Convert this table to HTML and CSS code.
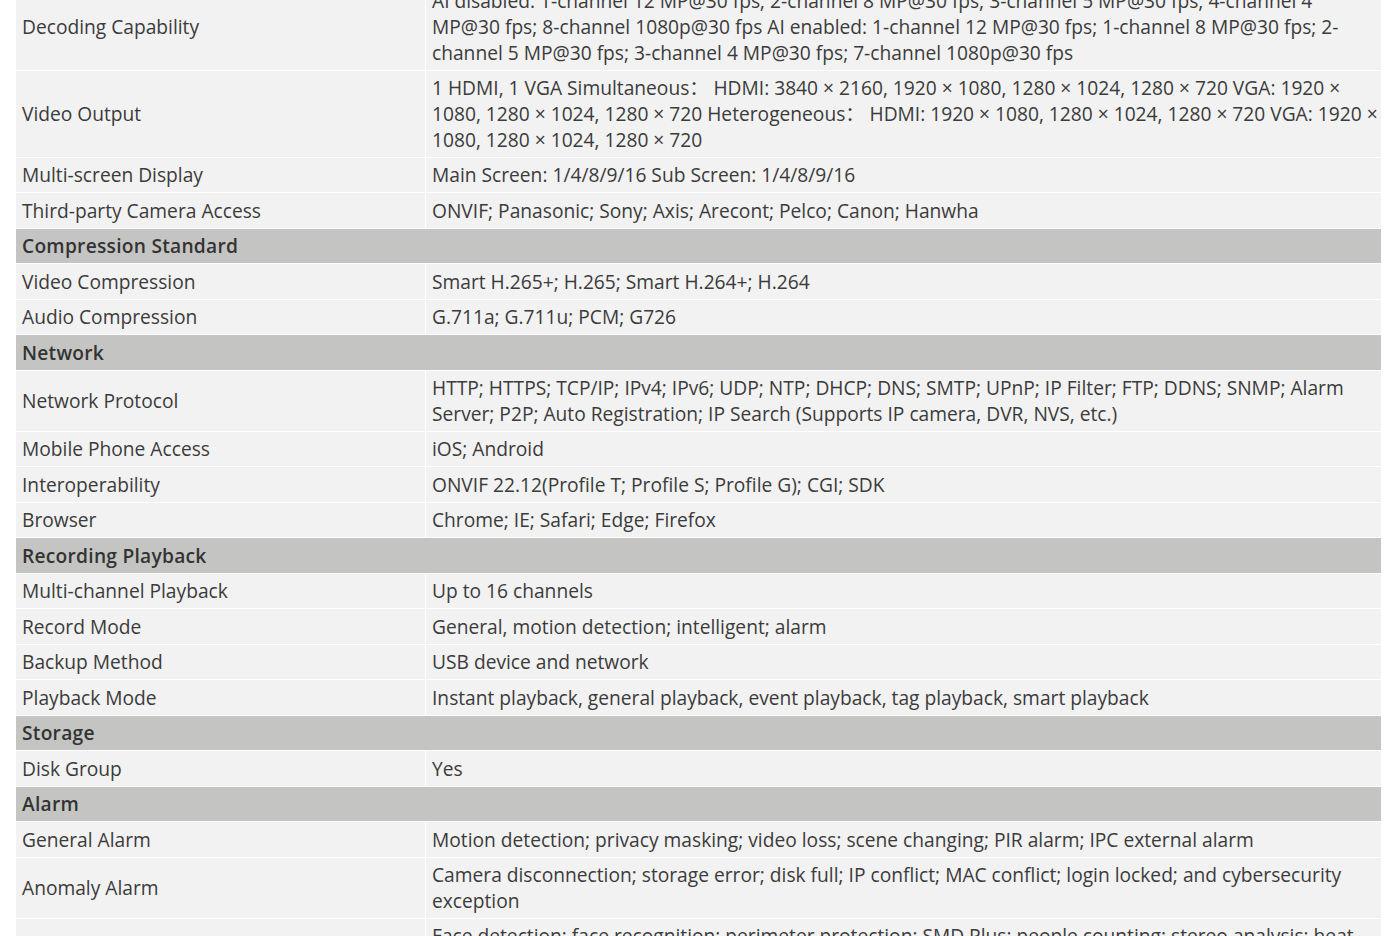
FILE: index.html
```html
<!DOCTYPE html>
<html lang="en">
<head>
<meta charset="utf-8">
<title>Specifications</title>
<link rel="stylesheet" href="styles.css">
</head>
<body>
<div class="page">
<table class="spec-table">
<colgroup><col class="col-label"><col class="col-value"></colgroup>
<tbody>
<tr><td>Decoding Capability</td><td>AI disabled: 1-channel 12 MP@30 fps; 2-channel 8 MP@30 fps; 3-channel 5 MP@30 fps; 4-channel 4 MP@30 fps; 8-channel 1080p@30 fps AI enabled: 1-channel 12 MP@30 fps; 1-channel 8 MP@30 fps; 2-channel 5 MP@30 fps; 3-channel 4 MP@30 fps; 7-channel 1080p@30 fps</td></tr>
<tr><td>Video Output</td><td>1 HDMI, 1 VGA Simultaneous： HDMI: 3840 × 2160, 1920 × 1080, 1280 × 1024, 1280 × 720 VGA: 1920 × 1080, 1280 × 1024, 1280 × 720 Heterogeneous： HDMI: 1920 × 1080, 1280 × 1024, 1280 × 720 VGA: 1920 × 1080, 1280 × 1024, 1280 × 720</td></tr>
<tr><td>Multi-screen Display</td><td>Main Screen: 1/4/8/9/16 Sub Screen: 1/4/8/9/16</td></tr>
<tr><td>Third-party Camera Access</td><td>ONVIF; Panasonic; Sony; Axis; Arecont; Pelco; Canon; Hanwha</td></tr>
<tr class="section"><td colspan="2">Compression Standard</td></tr>
<tr><td>Video Compression</td><td>Smart H.265+; H.265; Smart H.264+; H.264</td></tr>
<tr><td>Audio Compression</td><td>G.711a; G.711u; PCM; G726</td></tr>
<tr class="section"><td colspan="2">Network</td></tr>
<tr><td>Network Protocol</td><td>HTTP; HTTPS; TCP/IP; IPv4; IPv6; UDP; NTP; DHCP; DNS; SMTP; UPnP; IP Filter; FTP; DDNS; SNMP; Alarm Server; P2P; Auto Registration; IP Search (Supports IP camera, DVR, NVS, etc.)</td></tr>
<tr><td>Mobile Phone Access</td><td>iOS; Android</td></tr>
<tr><td>Interoperability</td><td>ONVIF 22.12(Profile T; Profile S; Profile G); CGI; SDK</td></tr>
<tr><td>Browser</td><td>Chrome; IE; Safari; Edge; Firefox</td></tr>
<tr class="section"><td colspan="2">Recording Playback</td></tr>
<tr><td>Multi-channel Playback</td><td>Up to 16 channels</td></tr>
<tr><td>Record Mode</td><td>General, motion detection; intelligent; alarm</td></tr>
<tr><td>Backup Method</td><td>USB device and network</td></tr>
<tr><td>Playback Mode</td><td>Instant playback, general playback, event playback, tag playback, smart playback</td></tr>
<tr class="section"><td colspan="2">Storage</td></tr>
<tr><td>Disk Group</td><td>Yes</td></tr>
<tr class="section"><td colspan="2">Alarm</td></tr>
<tr><td>General Alarm</td><td>Motion detection; privacy masking; video loss; scene changing; PIR alarm; IPC external alarm</td></tr>
<tr><td>Anomaly Alarm</td><td>Camera disconnection; storage error; disk full; IP conflict; MAC conflict; login locked; and cybersecurity exception</td></tr>
<tr><td>Smart Alarm</td><td>Face detection; face recognition; perimeter protection; SMD Plus; people counting; stereo analysis; heat map; video metadata; ANPR</td></tr>
</tbody>
</table>
</div>
</body>
</html>
```

FILE: styles.css
```css
html, body {
  margin: 0;
  padding: 0;
  background: #ffffff;
}

body {
  font-family: "Open Sans", "Noto Sans CJK SC", sans-serif;
  font-size: 19.2px;
  line-height: 25.7px;
  color: #3b3b3b;
}

.page {
  padding: 0 17px 0 16px;
}

.spec-table {
  width: 100%;
  margin-top: -16px;
  border-collapse: collapse;
  table-layout: fixed;
}

.col-label {
  width: 30%;
}

.spec-table td {
  background: #f2f2f2;
  padding: 4.4px 0 4.4px 6px;
  vertical-align: middle;
  border-bottom: 1px solid #ffffff;
  border-right: 1px solid #ffffff;
}

.spec-table td:last-child {
  border-right: none;
}

.spec-table tr.section td {
  background: #c4c5c3;
  font-weight: 600;
  letter-spacing: 0.25px;
  color: #333333;
}
```
